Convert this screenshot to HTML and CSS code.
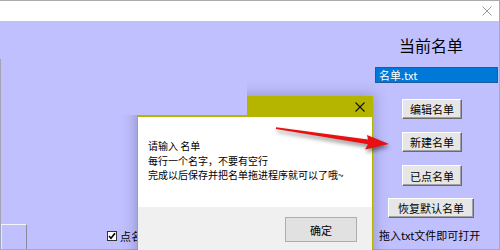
FILE: index.html
```html
<!DOCTYPE html>
<html lang="zh-CN">
<head>
<meta charset="utf-8">
<title>点名</title>
<link rel="stylesheet" href="styles.css">
</head>
<body>
<div class="window">
  <div class="titlebar">
    <svg class="close-main" width="10" height="10" viewBox="0 0 10 10"><path d="M0.5 0.5 L9.5 9.5 M9.5 0.5 L0.5 9.5" stroke="#9a9a9a" stroke-width="1"/></svg>
  </div>
  <div class="main">
    <div class="left">
      <div class="left-top"></div>
      <div class="left-pane">
        <div class="bottom-row">
          <div class="square"></div>
          <label class="check">
            <span class="box"><svg width="8" height="8" viewBox="0 0 8 8"><path d="M1 4 L3 6.2 L7 1.2" fill="none" stroke="#000" stroke-width="1.6"/></svg></span>
            <span class="check-label">点名不重复</span>
          </label>
        </div>
      </div>
    </div>
    <div class="right">
      <div class="heading">当前名单</div>
      <div class="listbox">名单.txt</div>
      <button class="btn b1">编辑名单</button>
      <button class="btn b2">新建名单</button>
      <button class="btn b3">已点名单</button>
      <button class="btn b4">恢复默认名单</button>
      <div class="hint">拖入txt文件即可打开</div>
    </div>
  </div>
</div>

<div class="dialog">
  <div class="dlg-title">
    <svg class="close-dlg" width="10" height="10" viewBox="0 0 10 10"><path d="M0.5 0.5 L9.5 9.5 M9.5 0.5 L0.5 9.5" stroke="#111" stroke-width="1.1"/></svg>
  </div>
  <div class="dlg-body">
    <p>请输入 名单</p>
    <p>每行一个名字，不要有空行</p>
    <p>完成以后保存并把名单拖进程序就可以了哦~</p>
  </div>
  <div class="dlg-foot">
    <button class="ok">确定</button>
  </div>
</div>

<div class="patch"></div>

<svg class="arrow" width="500" height="250" viewBox="0 0 500 250">
  <polygon fill="#e81010" points="276,127.3 368,139.6 367,135 389,144 365,149.5 368,144.2 276,129"/>
</svg>
</body>
</html>
```

FILE: styles.css
```css
* { box-sizing: border-box; }
html, body { margin: 0; padding: 0; }
body {
  width: 500px;
  height: 250px;
  overflow: hidden;
  position: relative;
  background: #fff;
  font-family: "Noto Sans CJK SC", "Noto Sans", sans-serif;
  color: #000;
}
.window {
  width: 500px;
  height: 250px;
  border-top: 1px solid #ababab;
  border-right: 1px solid #ababab;
  border-bottom: 1px solid #ababab;
  display: flex;
  flex-direction: column;
}
.titlebar {
  height: 20px;
  background: #fff;
  display: flex;
  justify-content: flex-end;
  align-items: center;
  padding-right: 7px;
}
.main {
  flex: 1;
  background: #c0c0ff;
  display: flex;
}
.left {
  flex: 1;
  display: flex;
  flex-direction: column;
}
.left-top { height: 38px; }
.left-pane {
  flex: 1;
  border-left: 1px solid #a4a4b8;
  display: flex;
  flex-direction: column;
  justify-content: flex-end;
}
.bottom-row {
  display: flex;
  align-items: flex-end;
}
.square {
  width: 26px;
  height: 25px;
  border-top: 1px solid #f4f4ff;
  border-left: 1px solid #e8e8f8;
  border-right: 1px solid #8a8a9a;
}
.check {
  display: flex;
  align-items: center;
  margin-left: 80px;
  margin-bottom: 6px;
  font-size: 11px;
  line-height: 14px;
}
.box {
  width: 10px;
  height: 10px;
  background: #fff;
  border: 1px solid #333;
  display: flex;
  align-items: center;
  justify-content: center;
  margin-right: 3px;
}
.right {
  width: 124px;
  display: flex;
  flex-direction: column;
  align-items: flex-start;
}
.heading {
  font-size: 16px;
  line-height: 20px;
  margin-top: 14px;
  margin-left: 24px;
}
.listbox {
  width: 123px;
  height: 16px;
  margin-top: 12px;
  background: #0078d7;
  border: 1px solid #1b5e9e;
  color: #fff;
  font-size: 11px;
  line-height: 14px;
  padding-left: 3px;
}
.btn {
  font-family: inherit;
  font-size: 11px;
  line-height: 14px;
  padding: 0;
  height: 20px;
  width: 60px;
  background: #e6e6e6;
  border: 1px solid;
  border-color: #fff #6b6b6b #6b6b6b #fff;
  box-shadow: inset -1px -1px 0 #a0a0a0;
  color: #000;
}
.b1 { margin-top: 16px; margin-left: 27px; }
.b2 { margin-top: 13px; margin-left: 27px; }
.b3 { margin-top: 13px; margin-left: 27px; height: 21px; }
.b4 { margin-top: 12px; margin-left: 13px; width: 86px; }
.hint {
  font-size: 11px;
  line-height: 14px;
  margin-top: 10px;
  margin-left: 4px;
  white-space: nowrap;
}

.dialog {
  position: absolute;
  left: 137px;
  top: 96px;
  width: 236px;
  height: 160px;
  border: 1px solid #b5b500;
  background: #fff;
  box-shadow: 0 0 12px 2px rgba(40, 40, 80, 0.28);
  display: flex;
  flex-direction: column;
}
.dlg-title {
  height: 20px;
  background: #b5b500;
  display: flex;
  justify-content: flex-end;
  align-items: center;
  padding-right: 7px;
}
.dlg-body {
  height: 90px;
  padding: 22px 0 0 10px;
  font-size: 10px;
  line-height: 14.5px;
  white-space: nowrap;
}
.dlg-body p { margin: 0; }
.dlg-foot {
  flex: 1;
  background: #f0f0f0;
  display: flex;
  justify-content: flex-end;
  align-items: flex-start;
  padding: 10px 15px 0 0;
}
.ok {
  width: 72px;
  height: 25px;
  background: #e1e1e1;
  border: 1px solid #adadad;
  font-family: inherit;
  font-size: 11px;
  padding: 0;
  color: #000;
}
.patch {
  position: absolute;
  left: 1px;
  top: 21px;
  width: 246px;
  height: 94px;
  background: #c0c0ff;
}
.arrow {
  position: absolute;
  left: 0;
  top: 0;
  filter: drop-shadow(1px 3px 2px rgba(0, 0, 0, 0.45));
}
```
